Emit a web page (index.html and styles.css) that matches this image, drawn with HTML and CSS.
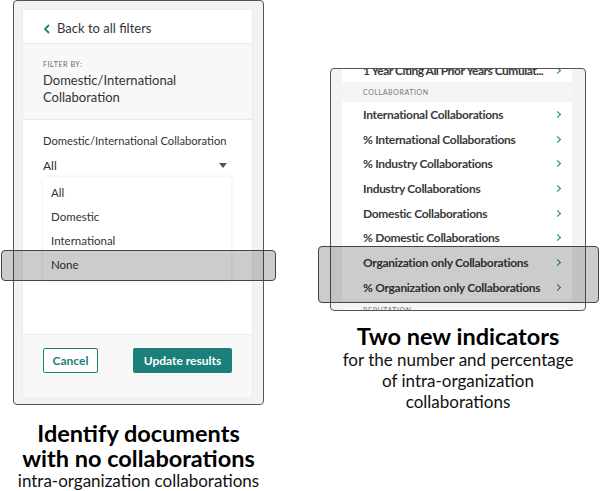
FILE: index.html
```html
<!DOCTYPE html>
<html>
<head>
<meta charset="utf-8">
<link rel="stylesheet" href="styles.css">
</head>
<body>
<div class="page">
  <div class="col col-left">
    <div class="frame frame-left">
      <div class="panel">
        <div class="back-row">
          <svg class="chev-left" width="8" height="10" viewBox="0 0 8 10"><path d="M6 1 L2 5 L6 9" fill="none" stroke="#1b7f7a" stroke-width="1.8"/></svg>
          <span>Back to all filters</span>
        </div>
        <div class="filter-by">
          <div class="fb-label">FILTER BY:</div>
          <div class="fb-title">Domestic/International Collaboration</div>
        </div>
        <div class="body-sec">
          <div class="field-label">Domestic/International Collaboration</div>
          <div class="select">
            <span>All</span>
            <svg width="8" height="5" viewBox="0 0 8 5"><path d="M0 0 H8 L4 5 Z" fill="#555"/></svg>
          </div>
          <div class="dropdown">
            <div class="opt">All</div>
            <div class="opt">Domestic</div>
            <div class="opt">International</div>
            <div class="opt">None</div>
          </div>
        </div>
        <div class="footer">
          <button class="btn btn-outline">Cancel</button>
          <button class="btn btn-solid">Update results</button>
        </div>
      </div>
    </div>
    <div class="hl hl-left"></div>
    <div class="caption caption-left">
      <div class="cap-title">Identify documents<br>with no collaborations</div>
      <div class="cap-sub">intra-organization collaborations</div>
    </div>
  </div>

  <div class="col col-right">
    <div class="frame frame-right">
      <div class="list-panel">
        <div class="list">
          <div class="row row-first"><span>1 Year Citing All Prior Years Cumulat...</span><i class="chev"></i></div>
          <div class="group">COLLABORATION</div>
          <div class="row"><span>International Collaborations</span><i class="chev"></i></div>
          <div class="row"><span>% International Collaborations</span><i class="chev"></i></div>
          <div class="row"><span>% Industry Collaborations</span><i class="chev"></i></div>
          <div class="row"><span>Industry Collaborations</span><i class="chev"></i></div>
          <div class="row"><span>Domestic Collaborations</span><i class="chev"></i></div>
          <div class="row"><span>% Domestic Collaborations</span><i class="chev"></i></div>
          <div class="row"><span>Organization only Collaborations</span><i class="chev"></i></div>
          <div class="row"><span>% Organization only Collaborations</span><i class="chev"></i></div>
          <div class="group">REPUTATION</div>
        </div>
      </div>
    </div>
    <div class="hl hl-right"></div>
    <div class="caption caption-right">
      <div class="cap-title">Two new indicators</div>
      <div class="cap-sub">for the number and percentage<br>of intra-organization<br>collaborations</div>
    </div>
  </div>
</div>
</body>
</html>
```

FILE: styles.css
```css
* { box-sizing: border-box; }
html, body { margin: 0; padding: 0; background: #fff; }
body { width: 600px; height: 491px; overflow: hidden; font-family: "Lato", "Open Sans", sans-serif; color: #333; }

.page { display: flex; position: relative; width: 600px; height: 491px; }
.col { display: flex; flex-direction: column; align-items: center; }
.col-left { margin-left: 13px; width: 251px; }
.col-right { margin-left: 66px; margin-top: 68px; width: 256px; }

.frame { border: 1px solid #555; border-radius: 4px; background: #f3f3f3; overflow: hidden; }
.frame-left { width: 251px; height: 410px; padding: 9px 11px 11px 9px; }
.panel { width: 229px; height: 388px; display: flex; flex-direction: column; background: #f8f8f8; box-shadow: 0 0 2px rgba(0,0,0,0.08); }

.back-row { height: 34px; background: #fff; display: flex; align-items: center; padding: 3px 0 0 20px; gap: 6px; font-size: 13px; color: #333; border-bottom: 1px solid #ececec; }
.chev-left { margin-top: 1px; }

.filter-by { height: 76px; padding: 16px 20px 0; border-bottom: 1px solid #e8e8e8; }
.fb-label { font-size: 7px; letter-spacing: 0.6px; color: #666; }
.fb-title { margin-top: 4px; font-size: 13px; line-height: 17px; color: #333; width: 160px; }

.body-sec { flex: 1; background: #fff; padding: 14px 20px 0; border-bottom: 1px solid #ececec; }
.field-label { font-size: 11.2px; color: #333; }
.select { display: flex; justify-content: space-between; align-items: center; margin-top: 11px; font-size: 12px; line-height: 15px; padding-right: 5px; }
.dropdown { margin-top: 4px; width: 188px; background: #fff; box-shadow: 0 0 4px rgba(0,0,0,0.09); padding: 4px 0 4px; }
.opt { height: 24px; line-height: 24px; padding-left: 8px; font-size: 11.5px; color: #333; }

.footer { height: 63px; display: flex; justify-content: space-between; align-items: flex-start; padding: 13px 20px 0 20px; }
.btn { height: 25px; border-radius: 2px; font-family: "Lato", sans-serif; font-weight: 700; font-size: 12px; padding: 0; }
.btn-outline { width: 55px; border: 1px solid #1b7f7a; background: #fff; color: #1b7f7a; }
.btn-solid { width: 99px; border: none; background: #1b7f7a; color: #fff; }

.hl { position: absolute; background: rgba(0,0,0,0.2); border: 1px solid #444; border-radius: 4px; }
.hl-left { left: 1px; top: 250px; width: 275px; height: 31px; }
.hl-right { left: 318px; top: 246px; width: 281px; height: 57px; }

.caption { text-align: center; color: #000; }
.cap-title { font-weight: 700; font-size: 23.5px; line-height: 24.5px; }
.cap-sub { font-size: 17px; line-height: 21px; color: #111; }
.caption-left { margin-top: 16px; width: 280px; }
.caption-right { margin-top: 13px; width: 280px; }

.frame-right { width: 256px; height: 243px; padding: 0 13px 0 11px; }
.list-panel { width: 230px; height: 100%; background: #fff; overflow: hidden; }
.list { margin-top: -10px; }
.row { height: 24.7px; display: flex; justify-content: space-between; align-items: center; padding: 0 12px 0 21px; font-size: 12px; letter-spacing: -0.3px; font-weight: 700; color: #3a3a3a; white-space: nowrap; }
.row-first { height: 23px; letter-spacing: -0.5px; }
.group { height: 20px; background: #f5f5f5; font-size: 7px; letter-spacing: 0.6px; color: #777; padding-left: 21px; line-height: 20px; }
.chev { width: 5px; height: 5px; border-right: 1.8px solid #1b7f7a; border-top: 1.8px solid #1b7f7a; transform: rotate(45deg); display: block; flex: none; }
```
